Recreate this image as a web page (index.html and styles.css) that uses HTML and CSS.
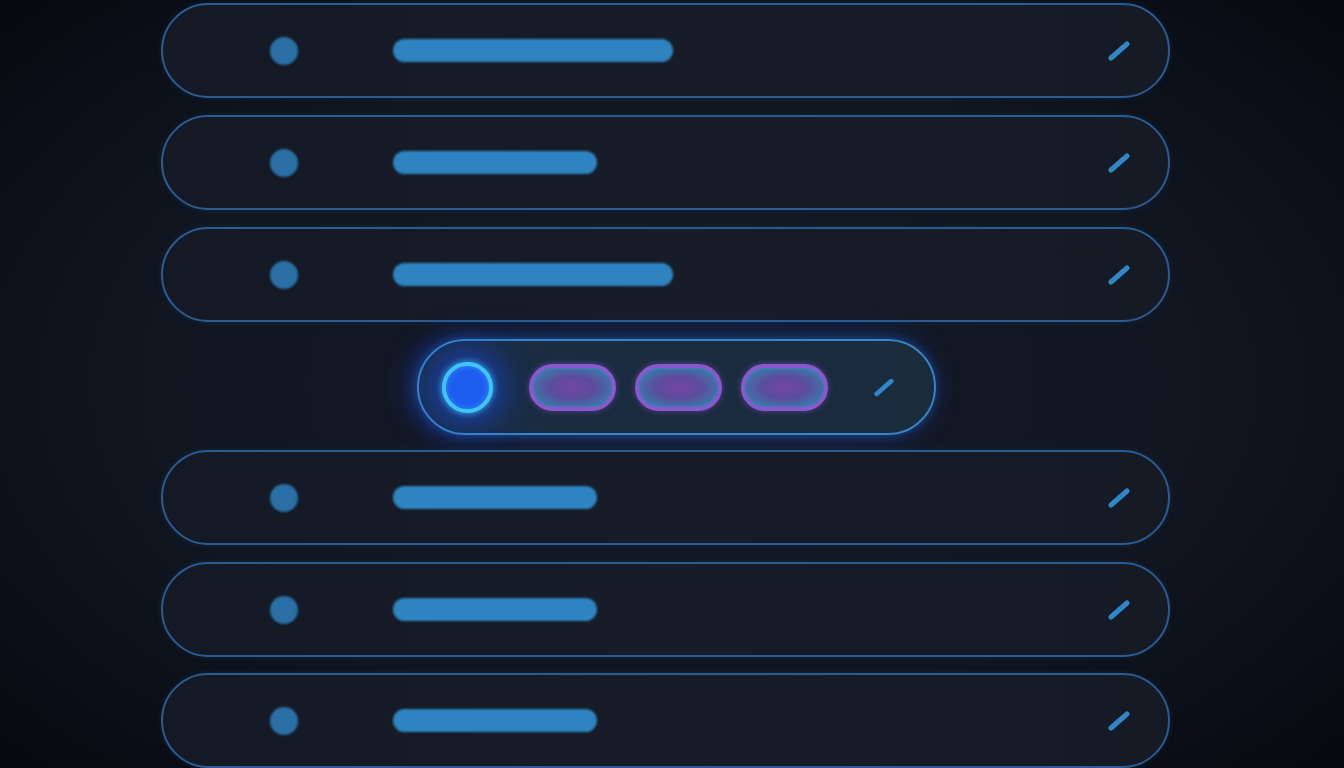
FILE: index.html
```html
<!DOCTYPE html>
<html lang="en">
<head>
<meta charset="utf-8">
<title>List</title>
<link rel="stylesheet" href="styles.css">
</head>
<body>
<div class="stack">
  <div class="row"><span class="dot"></span><span class="bar long"></span><svg class="pen" viewBox="0 0 24 22"><line x1="5" y1="18" x2="21" y2="4"/></svg></div>
  <div class="row"><span class="dot"></span><span class="bar short"></span><svg class="pen" viewBox="0 0 24 22"><line x1="5" y1="18" x2="21" y2="4"/></svg></div>
  <div class="row"><span class="dot"></span><span class="bar long"></span><svg class="pen" viewBox="0 0 24 22"><line x1="5" y1="18" x2="21" y2="4"/></svg></div>
  <div class="active">
    <span class="ring"></span>
    <span class="chip"></span>
    <span class="chip"></span>
    <span class="chip"></span>
    <svg class="pen pen-active" viewBox="0 0 24 22"><line x1="5" y1="18" x2="21" y2="4"/></svg>
  </div>
  <div class="row after"><span class="dot"></span><span class="bar short"></span><svg class="pen" viewBox="0 0 24 22"><line x1="5" y1="18" x2="21" y2="4"/></svg></div>
  <div class="row"><span class="dot"></span><span class="bar short"></span><svg class="pen" viewBox="0 0 24 22"><line x1="5" y1="18" x2="21" y2="4"/></svg></div>
  <div class="row last"><span class="dot"></span><span class="bar short"></span><svg class="pen" viewBox="0 0 24 22"><line x1="5" y1="18" x2="21" y2="4"/></svg></div>
</div>
</body>
</html>
```

FILE: styles.css
```css
html, body {
  margin: 0;
  padding: 0;
  width: 1344px;
  height: 768px;
  overflow: hidden;
}
body {
  background:
    radial-gradient(ellipse 70% 75% at 50% 50%, #151a27 0%, #111621 55%, #0a0d15 85%, #06080d 100%);
  font-family: "Liberation Sans", Arial, sans-serif;
}
.stack {
  display: flex;
  flex-direction: column;
  gap: 17px;
  padding-top: 3px;
}
.row {
  box-sizing: border-box;
  width: 1009px;
  height: 95px;
  margin-left: 161px;
  border: 2px solid #2a5c92;
  border-radius: 48px;
  background: linear-gradient(90deg, #141925 0%, #171c28 50%, #151a25 100%);
  display: flex;
  align-items: center;
  padding-left: 107px;
  padding-right: 38px;
  box-shadow: 0 0 6px rgba(40, 90, 150, 0.2);
}
.row.after { margin-top: -2px; }
.row.last { margin-top: -1px; }
.dot {
  width: 28px;
  height: 28px;
  border-radius: 50%;
  background: #2a6fa6;
  filter: blur(1px);
  flex: none;
}
.bar {
  height: 23px;
  border-radius: 12px;
  background: #2d84c0;
  margin-left: 95px;
  filter: blur(1px);
  flex: none;
}
.bar.long { width: 280px; }
.bar.short { width: 204px; }
.pen {
  width: 24px;
  height: 22px;
  margin-left: auto;
  flex: none;
  filter: blur(0.4px);
}
.pen line {
  stroke: #2f87c8;
  stroke-width: 5;
  stroke-linecap: round;
}
.active {
  box-sizing: border-box;
  width: 519px;
  height: 96px;
  margin-left: 417px;
  border: 2.5px solid #3585c8;
  border-radius: 48px;
  background: linear-gradient(90deg, #1a2e4c 0%, #1a2c40 25%, #1a2b3c 100%);
  display: flex;
  align-items: center;
  padding-left: 23px;
  box-shadow: 0 0 10px rgba(50, 130, 220, 0.35), -6px 0 30px rgba(30, 80, 230, 0.45);
}
.ring {
  box-sizing: border-box;
  width: 51px;
  height: 51px;
  border-radius: 50%;
  border: 4.5px solid #3fc6ff;
  background: #1f5cf0;
  box-shadow: 0 0 6px 1px rgba(60, 190, 255, 0.75), 0 0 30px 14px rgba(25, 80, 255, 0.45), inset 0 0 6px rgba(60, 190, 255, 0.5);
  flex: none;
}
.chip {
  box-sizing: border-box;
  width: 87px;
  height: 47px;
  border-radius: 24px;
  border: 4px solid #8858cc;
  background: radial-gradient(ellipse at center, #7446a6 0%, #5c4c9c 40%, #3b78aa 78%, #4268b0 100%);
  box-shadow: 0 0 6px rgba(150, 90, 230, 0.5), inset 0 0 3px rgba(70, 150, 210, 0.6);
  margin-left: 19px;
  flex: none;
}
.ring + .chip { margin-left: 36px; }
.pen-active {
  margin-left: 44px;
  width: 22px;
  height: 21px;
}
```
